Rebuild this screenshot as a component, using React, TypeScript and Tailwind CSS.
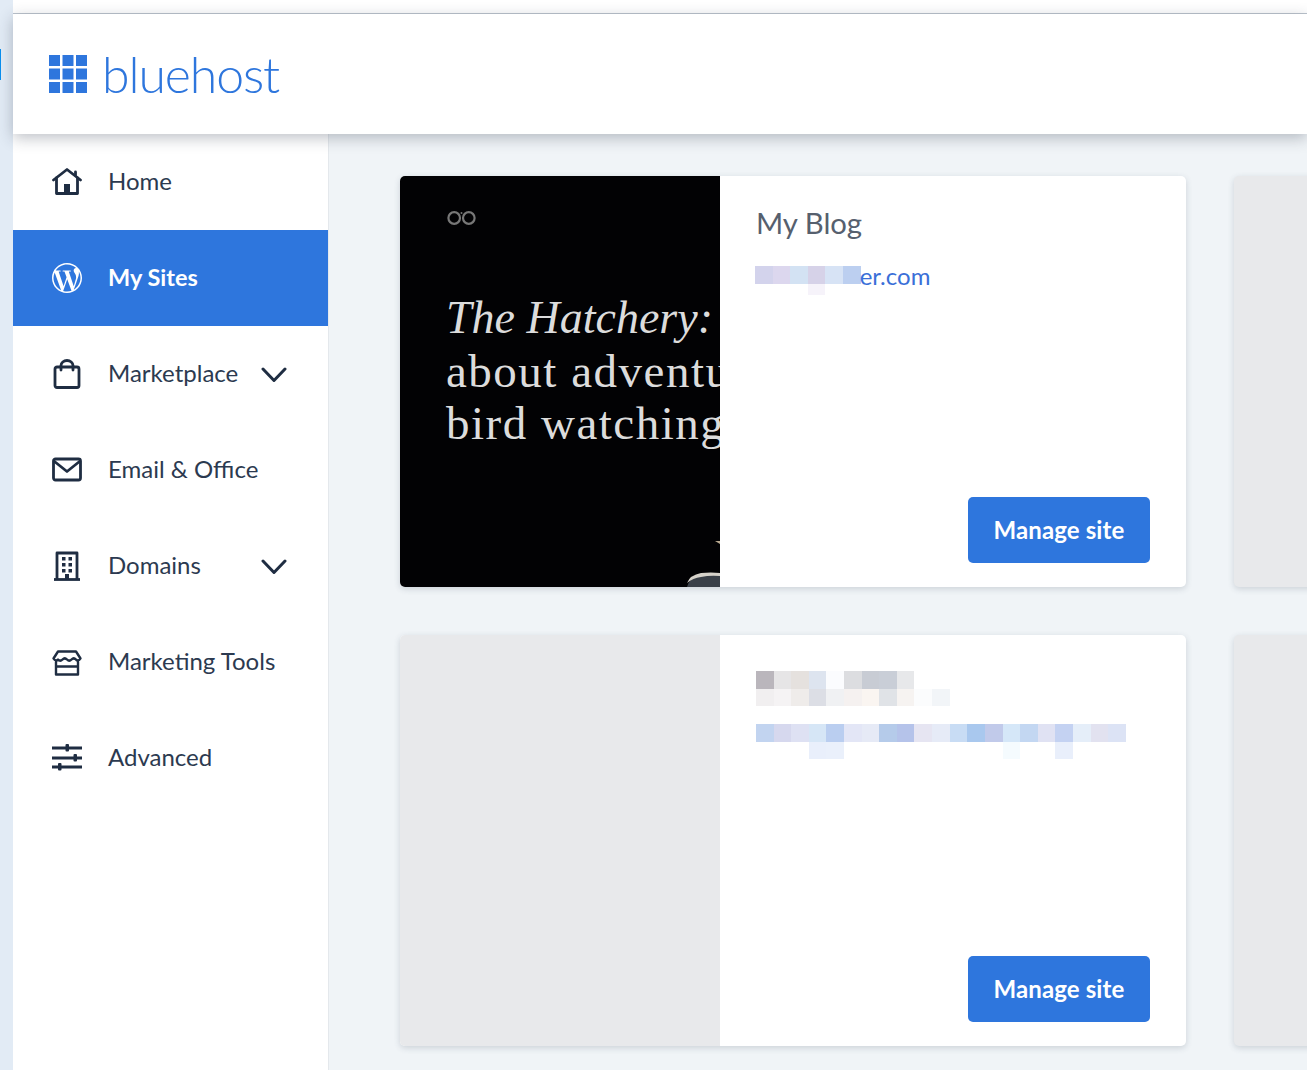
import { SiWordpress } from "react-icons/si"

const sans = "font-['Lato','Noto_Sans',sans-serif]"

const topCells = ["bg-[#bab6bc]", "bg-[#e6e5e6]", "bg-[#e5e1de]", "bg-[#dde4ef]", "bg-[#fbfcfe]", "bg-[#dcdde0]", "bg-[#c8ccd4]", "bg-[#c9ced7]", "bg-[#e7e8ea]"]
const topCells2 = ["bg-[#f1eff0]", "bg-[#f5f3f4]", "bg-[#efecea]", "bg-[#dcdee5]", "bg-[#f0f1f3]", "bg-[#f5f1f0]", "bg-[#faf5f1]", "bg-[#e0e3e7]", "bg-[#f6f3f1]", "bg-[#fbfcfd]", "bg-[#f2f5f8]"]
const linkCells = ["bg-[#c2d4f0]", "bg-[#d6d8ee]", "bg-[#dee1f3]", "bg-[#d6e6f6]", "bg-[#bacef0]", "bg-[#e3e6f6]", "bg-[#e6eaf6]", "bg-[#b5cbea]", "bg-[#b5c3ea]", "bg-[#e6e5f2]", "bg-[#e6ebf7]", "bg-[#c8dcf4]", "bg-[#a9c8ee]", "bg-[#c1caea]", "bg-[#d5e7f8]", "bg-[#c3d7f2]", "bg-[#e0e2f3]", "bg-[#c4d2f2]", "bg-[#e5eef9]", "bg-[#e2e2f0]", "bg-[#dce3f5]"]
const linkCells2 = ["", "", "", "bg-[#e9effb]", "bg-[#eaf0fb]", "", "", "", "", "", "", "", "", "", "bg-[#f5fbfe]", "", "", "bg-[#e9effb]"]
const blogCells = ["bg-[#d3d3ec]", "bg-[#dcd7ee]", "bg-[#d3e2f3]", "bg-[#d6d2e8]", "bg-[#d7e3f5]", "bg-[#bccff0]"]
const blogCells2 = ["", "", "", "bg-[#f6f3fa]"]

function Mosaic({ cells, h }: { cells: string[]; h: string }) {
  return (
    <div className="flex">
      {cells.map((c, i) => (
        <div key={i} className={`w-[17.62px] ${h} ${c}`} />
      ))}
    </div>
  )
}

function IconBox({ children }: { children: React.ReactNode }) {
  return (
    <svg width="30" height="30" viewBox="0 0 30 30" fill="none" stroke="#1f2d42" strokeWidth="2.8" strokeLinejoin="round" strokeLinecap="round">
      {children}
    </svg>
  )
}

const HomeIcon = () => (
  <IconBox>
    <path d="M1.5 13 15 2.5 28.500 13" />
    <path d="M4.500 11v15.500h21V11" />
    <path d="M23.500 8V5" />
    <rect x="12" y="17" width="6" height="9" fill="#1f2d42" stroke="none" />
  </IconBox>
)

const BagIcon = () => (
  <IconBox>
    <rect x="3" y="8" width="24" height="20.500" rx="2" />
    <path d="M9 11V6.500a6 5 0 0 1 12 0V11" />
  </IconBox>
)

const MailIcon = () => (
  <IconBox>
    <rect x="1.500" y="4" width="27" height="21" rx="2" />
    <path d="M2.500 6.500 15 16.500 27.500 6.500" />
  </IconBox>
)

const BuildingIcon = () => (
  <IconBox>
    <path d="M2 28.500h26" strokeLinecap="butt" />
    <path d="M5 28V2h20v26" strokeLinecap="butt" />
    <g fill="#1f2d42" stroke="none">
      <rect x="10" y="6" width="3.500" height="3.500" />
      <rect x="16.500" y="6" width="3.500" height="3.500" />
      <rect x="10" y="12" width="3.500" height="3.500" />
      <rect x="16.500" y="12" width="3.500" height="3.500" />
      <rect x="10" y="18" width="3.500" height="3.500" />
      <rect x="16.500" y="18" width="3.500" height="3.500" />
      <rect x="13" y="23" width="4" height="5" />
    </g>
  </IconBox>
)

const StoreIcon = () => (
  <IconBox>
    <path d="M6 4.500h18l4.500 7c-1.500 2.500-3.500 2.500-4.500 1-1.500-1.500-3-1.500-4.500 0-1.500 1.500-3 1.500-4.500 0-1.500-1.500-3-1.500-4.500 0-1.500 1.500-3 1.500-4.500 0-1 1.500-3 1.500-4.500-1z" strokeWidth="2.4" />
    <path d="M4 15v12.500h22V15M4 19.500h22" strokeWidth="2.4" />
  </IconBox>
)

const SlidersIcon = () => (
  <IconBox>
    <path d="M0 5h30M0 15h30M0 24h30" strokeLinecap="butt" />
    <g fill="#1f2d42" stroke="none">
      <rect x="13.500" y="1" width="3.500" height="7.500" rx="1" />
      <rect x="21.500" y="11" width="3.500" height="7.500" rx="1" />
      <rect x="6" y="20" width="3.500" height="7.500" rx="1" />
    </g>
  </IconBox>
)

const Chevron = () => (
  <svg width="28" height="16" viewBox="0 0 28 16" fill="none" stroke="#1f2d42" strokeWidth="3" strokeLinecap="round" strokeLinejoin="round">
    <path d="M3 2l11 11.500L25 2" />
  </svg>
)

const items = [
  { label: "Home", icon: <HomeIcon /> },
  { label: "My Sites", icon: <SiWordpress size={30} color="#fff" />, active: true },
  { label: "Marketplace", icon: <BagIcon />, chevron: true },
  { label: "Email & Office", icon: <MailIcon /> },
  { label: "Domains", icon: <BuildingIcon />, chevron: true },
  { label: "Marketing Tools", icon: <StoreIcon /> },
  { label: "Advanced", icon: <SlidersIcon /> },
]

function NavItem({ label, icon, active, chevron }: { label: string; icon: React.ReactNode; active?: boolean; chevron?: boolean }) {
  return (
    <div className={`flex h-24 items-center pl-[39px] ${active ? "bg-[#2e76dd] font-bold text-white" : "text-[#2c3a50]"}`}>
      <span className="flex w-[30px] justify-center">{icon}</span>
      <span className={`ml-[26px] leading-none ${active ? "text-[23.500px]" : "pb-[2px] text-[24px]"}`}>{label}</span>
      {chevron && (
        <span className="ml-auto mr-10 mt-[1px]">
          <Chevron />
        </span>
      )}
    </div>
  )
}

function ManageButton() {
  return (
    <button className="mt-auto flex h-[66px] w-[182px] items-center justify-center self-end rounded-[5px] bg-[#2e76dd] pb-[1px] text-[24px] font-bold tracking-[0.1px] text-white">
      Manage site
    </button>
  )
}

function GrayCard() {
  return <div className="rounded-[5px] bg-[#e8e9eb] shadow-[0_2px_6px_rgba(60,75,95,0.2)]" />
}

export default function App() {
  return (
    <div className={`flex h-[1070px] w-[1307px] overflow-hidden bg-[#f0f4f7] ${sans}`}>
      {/* left window edge */}
      <div className="flex w-[13px] shrink-0 flex-col bg-[#e2ebf5] pt-[49px]">
        <div className="h-[31px] w-[1px] bg-[#0a8fef]" />
      </div>

      <div className="flex min-w-0 flex-1 flex-col">
        <div className="h-[14px] shrink-0 border-b border-[#bcc4cd] bg-white" />

        <header className="relative z-10 flex h-[120px] shrink-0 items-center bg-white pl-9 shadow-[0_4px_14px_rgba(40,50,70,0.3)]">
          <svg width="38" height="38" viewBox="0 0 38 38" fill="#2e76dd">
            <rect x="0" y="0" width="11" height="11" />
            <rect x="13.500" y="0" width="11" height="11" />
            <rect x="27" y="0" width="11" height="11" />
            <rect x="0" y="13.500" width="11" height="11" />
            <rect x="13.500" y="13.500" width="11" height="11" />
            <rect x="27" y="13.500" width="11" height="11" />
            <rect x="0" y="27" width="11" height="11" />
            <rect x="13.500" y="27" width="11" height="11" />
            <rect x="27" y="27" width="11" height="11" />
          </svg>
          <span className="ml-[15px] text-[50px] font-light leading-none tracking-[-1.100px] text-[#2e76dd]">bluehost</span>
        </header>

        <div className="flex min-h-0 flex-1">
          <nav className="w-[316px] shrink-0 border-r border-[#e4e8ec] bg-white">
            {items.map((item) => (
              <NavItem key={item.label} {...item} />
            ))}
          </nav>

          <main className="min-w-0 flex-1 overflow-hidden pl-[71px] pt-[42px]">
            <div className="grid grid-cols-[786px_786px] grid-rows-[411px_411px] gap-12">
              {/* first site */}
              <div className="flex overflow-hidden rounded-[5px] bg-white shadow-[0_2px_6px_rgba(60,75,95,0.2)]">
                <div className="relative w-[320px] shrink-0 overflow-hidden bg-[#020204] pl-[47px] pt-[34px]">
                  <svg width="30" height="15" viewBox="0 0 30 15" fill="none" stroke="#777" strokeWidth="2.200">
                    <circle cx="7.200" cy="8" r="5.800" />
                    <circle cx="21.800" cy="8" r="5.800" />
                    <circle cx="14.500" cy="3" r="1" fill="#777" stroke="none" />
                  </svg>
                  <div className="-ml-px mt-[67px] whitespace-nowrap font-['Liberation_Serif',serif] text-[47px] leading-[52.500px] text-[#dcdcdc]">
                    <div className="text-[46px] italic">The Hatchery:</div>
                    <div className="tracking-[1.500px]">about adventure</div>
                    <div className="tracking-[1.500px]">bird watching</div>
                  </div>
                  {/* bird at the bottom edge of the cover */}
                  <svg className="absolute bottom-0 right-0" width="34" height="46" viewBox="0 0 34 46" fill="#d6d2ca">
                    <path d="M29 0l5-2v5z" fill="#b8a88f" />
                    <path d="M1 46q2-9 14-12 10-2 19-1v13z" fill="#3a4048" />
                    <path d="M1 42q3-8 14-10 10-1 19 0v3q-10-1-19 1-8 1-14 6z" />
                  </svg>
                </div>
                <div className="flex min-w-0 flex-1 flex-col pb-6 pl-[36px] pr-9 pt-[29px]">
                  <div className="text-[29.300px] leading-9 text-[#56606e]">My Blog</div>
                  <div className="-ml-px mt-[25px] flex items-start">
                    <div>
                      <Mosaic cells={blogCells} h="h-[18px]" />
                      <Mosaic cells={blogCells2} h="h-[11px]" />
                    </div>
                    <span className="-ml-px -mt-[3px] text-[24px] leading-[26px] text-[#3a6fd8]">er.com</span>
                  </div>
                  <ManageButton />
                </div>
              </div>

              <GrayCard />

              {/* second site */}
              <div className="flex overflow-hidden rounded-[5px] bg-white shadow-[0_2px_6px_rgba(60,75,95,0.2)]">
                <div className="w-[320px] shrink-0 bg-[#e8e9eb]" />
                <div className="flex min-w-0 flex-1 flex-col pb-6 pl-[36px] pr-9 pt-9">
                  <Mosaic cells={topCells} h="h-[18px]" />
                  <Mosaic cells={topCells2} h="h-[17px]" />
                  <div className="mt-[18px]">
                    <Mosaic cells={linkCells} h="h-[18px]" />
                    <Mosaic cells={linkCells2} h="h-[17px]" />
                  </div>
                  <ManageButton />
                </div>
              </div>

              <GrayCard />
            </div>
          </main>
        </div>
      </div>
    </div>
  )
}
